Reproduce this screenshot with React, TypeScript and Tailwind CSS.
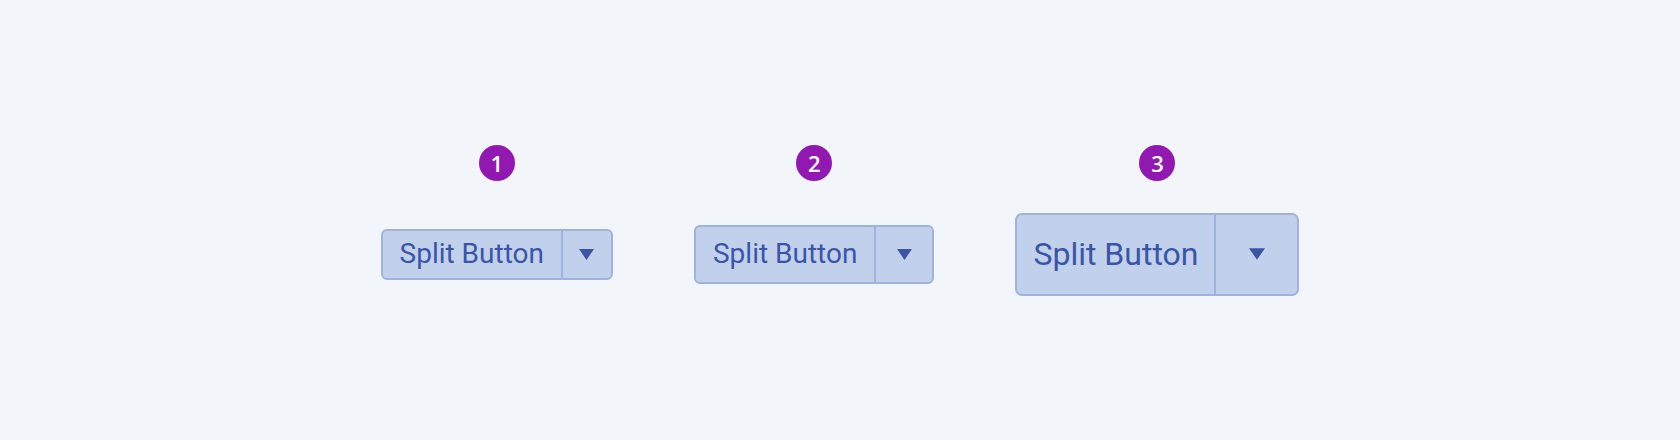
type Size = 'sm' | 'md' | 'lg';

const sizes: Record<Size, { box: string; text: string; arrow: string; caret: number }> = {
  sm: { box: 'h-[51px] rounded-[6px]', text: 'text-[28px] px-[17px]', arrow: 'w-[50px]', caret: 15 },
  md: { box: 'h-[59px] rounded-[6px]', text: 'text-[28px] px-[17px]', arrow: 'w-[58px]', caret: 15 },
  lg: { box: 'h-[83px] rounded-[7px]', text: 'text-[32px] px-[16px]', arrow: 'w-[83px]', caret: 16 },
};

function Caret({ size }: { size: number }) {
  return (
    <svg width={size} height={Math.round(size * 0.72)} viewBox="0 0 15 11" className="block">
      <polygon points="0,0 15,0 7.5,11" fill="#3a55a8" />
    </svg>
  );
}

function SplitButton({ size }: { size: Size }) {
  const s = sizes[size];
  return (
    <div
      className={`flex items-stretch border-2 border-[#9fb3dc] bg-[#c2d1eb] text-[#3a55a8] ${s.box}`}
      style={{ fontFamily: 'Roboto, "Liberation Sans", sans-serif' }}
    >
      <button className={`flex items-center leading-none ${s.text}`}>Split Button</button>
      <button className={`flex items-center justify-center border-l-2 border-[#9fb3dc] ${s.arrow}`}>
        <Caret size={s.caret} />
      </button>
    </div>
  );
}

function Badge({ n }: { n: number }) {
  return (
    <div
      className="flex h-9 w-9 items-center justify-center rounded-full bg-[#9119b1] text-[22px] font-semibold leading-none text-white"
      style={{ fontFamily: '"Open Sans", "Noto Sans", sans-serif' }}
    >
      {n}
    </div>
  );
}

export default function App() {
  const items: Size[] = ['sm', 'md', 'lg'];
  return (
    <div className="flex h-[440px] w-full items-center justify-center bg-[#f2f5fa]">
      <div className="flex gap-[81px]">
        {items.map((size, i) => (
          <div key={size} className="flex flex-col items-center gap-8">
            <Badge n={i + 1} />
            <div className="flex h-[83px] items-center">
              <SplitButton size={size} />
            </div>
          </div>
        ))}
      </div>
    </div>
  );
}
